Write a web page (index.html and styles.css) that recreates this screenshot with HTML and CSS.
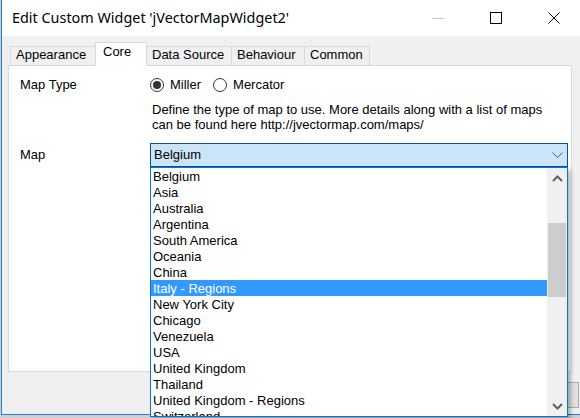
FILE: index.html
```html
<!DOCTYPE html>
<html>
<head>
<meta charset="utf-8">
<link rel="stylesheet" href="styles.css">
</head>
<body>
<div class="window">
  <div class="titlebar">
    <div class="title">Edit Custom Widget 'jVectorMapWidget2'</div>
    <div class="caption">
      <div class="cbtn"><svg width="12" height="12" viewBox="0 0 12 12"><line x1="0" y1="6.5" x2="12" y2="6.5" stroke="#c6c6c6" stroke-width="1"/></svg></div>
      <div class="cbtn"><svg width="12" height="12" viewBox="0 0 12 12"><rect x="0.5" y="0.5" width="11" height="11" fill="none" stroke="#000" stroke-width="1"/></svg></div>
      <div class="cbtn"><svg width="12" height="12" viewBox="0 0 12 12"><path d="M0.5 0.5 L11.5 11.5 M11.5 0.5 L0.5 11.5" stroke="#000" stroke-width="1"/></svg></div>
    </div>
  </div>
  <div class="client">
    <div class="tabs">
      <div class="tab tab-appearance">Appearance</div>
      <div class="tab tab-core active">Core</div>
      <div class="tab tab-data">Data Source</div>
      <div class="tab tab-behaviour">Behaviour</div>
      <div class="tab tab-common">Common</div>
    </div>
    <div class="panel">
      <div class="form">
        <div class="label">Map Type</div>
        <div class="radios">
          <span class="radio checked"></span><span class="rlabel">Miller</span>
          <span class="radio"></span><span class="rlabel">Mercator</span>
        </div>
        <div></div>
        <div class="desc">Define the type of map to use. More details along with a list of maps<br>can be found here http://jvectormap.com/maps/</div>
        <div class="label label-map">Map</div>
        <div class="combo-wrap">
          <div class="combo">
            <span class="combo-text">Belgium</span>
            <svg class="combo-arrow" width="11" height="7" viewBox="0 0 11 7"><polyline points="0.5,0.5 5.5,5.5 10.5,0.5" fill="none" stroke="#5a5a5a" stroke-width="1"/></svg>
          </div>
          <div class="dropdown">
            <ul class="items">
              <li>Belgium</li>
              <li>Asia</li>
              <li>Australia</li>
              <li>Argentina</li>
              <li>South America</li>
              <li>Oceania</li>
              <li>China</li>
              <li class="selected">Italy - Regions</li>
              <li>New York City</li>
              <li>Chicago</li>
              <li>Venezuela</li>
              <li>USA</li>
              <li>United Kingdom</li>
              <li>Thailand</li>
              <li>United Kingdom - Regions</li>
              <li>Switzerland</li>
            </ul>
            <div class="scrollbar">
              <div class="sb-arrow"><svg width="11" height="7" viewBox="0 0 11 7"><polyline points="1,6 5.5,1.5 10,6" fill="none" stroke="#606060" stroke-width="2"/></svg></div>
              <div class="sb-track"><div class="sb-thumb"></div></div>
              <div class="sb-arrow sb-down"><svg width="11" height="7" viewBox="0 0 11 7"><polyline points="1,1 5.5,5.5 10,1" fill="none" stroke="#606060" stroke-width="2"/></svg></div>
            </div>
          </div>
        </div>
      </div>
    </div>
    <div class="footer">
      <div class="btn">Cancel</div>
    </div>
  </div>
</div>
</body>
</html>
```

FILE: styles.css
```css
html, body {
  margin: 0;
  padding: 0;
}
body {
  width: 580px;
  height: 418px;
  overflow: hidden;
  background: #cfcfcf;
  font-family: "Liberation Sans", Arial, sans-serif;
  font-size: 13px;
  color: #000;
}
.window {
  margin-left: 1px;
  width: 581px;
  height: 414px;
  border-left: 1px solid #1f7fd8;
  border-bottom: 1px solid #1f7fd8;
  background: #f0f0f0;
  display: flex;
  flex-direction: column;
}
.titlebar {
  height: 36px;
  flex: none;
  background: #fff;
  display: flex;
  align-items: center;
}
.title {
  flex: 1;
  padding-left: 10px;
  padding-bottom: 1px;
  font-family: "Noto Sans", "Open Sans", sans-serif;
  font-size: 14.4px;
  color: #000;
  white-space: nowrap;
}
.caption {
  display: flex;
  height: 100%;
}
.cbtn {
  width: 58px;
  height: 100%;
  display: flex;
  align-items: center;
  justify-content: center;
}
.client {
  flex: 1;
  display: flex;
  flex-direction: column;
}
.tabs {
  height: 29px;
  flex: none;
  display: flex;
  align-items: flex-end;
  padding-left: 8px;
}
.tab {
  box-sizing: border-box;
  height: 19px;
  border: 1px solid #d9d9d9;
  border-bottom: none;
  margin-right: -1px;
  padding: 0 0 0 5px;
  line-height: 15px;
  background: #f0f0f0;
  white-space: nowrap;
}
.tab-appearance { width: 86px; }
.tab-core { width: 52px; }
.tab-data { width: 86px; }
.tab-behaviour { width: 74px; }
.tab-common { width: 66px; }
.tab.active {
  position: relative;
  z-index: 1;
  height: 24px;
  margin: 0 -1px -1px 0;
  padding: 1px 0 0 7px;
  background: #fff;
}
.panel {
  box-sizing: border-box;
  margin-left: 6px;
  width: 564px;
  height: 307px;
  flex: none;
  border: 1px solid #d9d9d9;
  background: #fff;
  padding: 11px 3px 0 11px;
}
.form {
  display: grid;
  grid-template-columns: 130px 418px;
  align-items: center;
}
.label {
  line-height: 16px;
}
.radios {
  display: flex;
  align-items: center;
  height: 16px;
}
.radio {
  box-sizing: border-box;
  width: 14px;
  height: 14px;
  border: 1px solid #333;
  border-radius: 50%;
  background: #fff;
  display: flex;
  align-items: center;
  justify-content: center;
}
.radio.checked::after {
  content: "";
  width: 8px;
  height: 8px;
  border-radius: 50%;
  background: #333;
}
.rlabel {
  margin-left: 6px;
  margin-right: 12px;
  line-height: 16px;
}
.desc {
  margin-top: 9px;
  padding-left: 2px;
  line-height: 15px;
  white-space: nowrap;
}
.label-map {
  margin-top: 11px;
  line-height: 24px;
}
.combo-wrap {
  position: relative;
  margin-top: 11px;
}
.combo {
  box-sizing: border-box;
  height: 24px;
  border: 1px solid #005499;
  background: #cce4f7;
  display: flex;
  align-items: center;
  justify-content: space-between;
  padding: 0 4px 0 3px;
  line-height: 22px;
}
.combo-arrow {
  margin-top: 1px;
}
.dropdown {
  position: absolute;
  left: 0;
  top: 100%;
  z-index: 10;
  box-sizing: border-box;
  width: 418px;
  height: 250px;
  border: 1px solid #0078d7;
  background: #fff;
  display: flex;
  box-shadow: 3px 3px 4px rgba(0, 0, 0, 0.28);
}
.items {
  list-style: none;
  margin: 0;
  padding: 0;
  width: 396px;
  overflow: hidden;
}
.items li {
  height: 16px;
  line-height: 17px;
  padding-left: 2px;
  white-space: nowrap;
}
.items li.selected {
  background: #3399ff;
  color: #fff;
}
.scrollbar {
  width: 20px;
  background: #f0f0f0;
  display: flex;
  flex-direction: column;
}
.sb-arrow {
  height: 20px;
  flex: none;
  display: flex;
  align-items: center;
  justify-content: center;
}
.sb-track {
  flex: 1;
}
.sb-thumb {
  margin: 35px 1px 0 1px;
  height: 74px;
  background: #cdcdcd;
}
.footer {
  flex: 1;
  display: flex;
  justify-content: flex-end;
  padding: 10px 4px 0 0;
}
.btn {
  box-sizing: border-box;
  width: 75px;
  height: 26px;
  border: 1px solid #adadad;
  background: #e1e1e1;
  text-align: center;
  line-height: 24px;
}
```
